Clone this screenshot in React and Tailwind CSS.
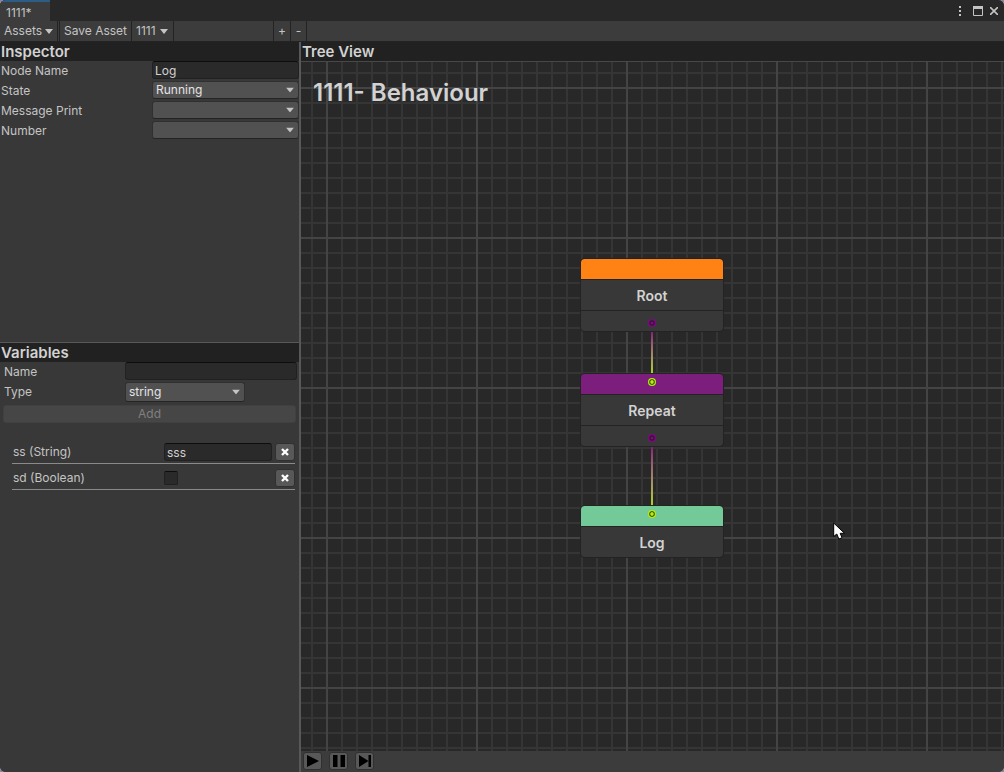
import React from "react";

function Caret({ className = "" }) {
  return (
    <svg viewBox="0 0 8 5" className={`w-2 h-[5px] ${className}`} aria-hidden="true">
      <path d="M0 0H8L4 5Z" fill="#c4c4c4" />
    </svg>
  );
}

const fieldClass =
  "block rounded-[3px] border border-[#212121] border-t-[#0d0d0d] bg-[#2a2a2a] text-xs text-[#d2d2d2] outline-none";

function Dropdown({ id, options, className }) {
  return (
    <div className={`relative ${className}`}>
      <select
        id={id}
        className="block h-full w-full appearance-none rounded-[3px] border border-[#303030] border-b-[#242424] bg-[#515151] pl-[3px] pr-5 text-xs leading-4 text-[#e4e4e4] outline-none"
      >
        {options.map((o) => (
          <option key={o}>{o}</option>
        ))}
      </select>
      <Caret className="pointer-events-none absolute right-[5px] top-1/2 -translate-y-1/2" />
    </div>
  );
}

function PanelTitle({ children }) {
  return (
    <h2 className="h-[19px] shrink-0 bg-[#212121] pl-px text-[15px] font-semibold leading-[19px] text-[#d2d2d2]">
      {children}
    </h2>
  );
}

function InspectorRow({ id, label, children }) {
  return (
    <div className="flex h-5 items-start pl-px">
      <label htmlFor={id} className="w-[151px] shrink-0 text-xs leading-5">
        {label}
      </label>
      {children}
    </div>
  );
}

function VariableRow({ id, label, children }) {
  return (
    <div className="flex h-[26px] items-center border-b border-[#8a8a8a] pt-[3px]">
      <label htmlFor={id} className="w-[152px] shrink-0 pl-px text-xs">
        {label}
      </label>
      <div className="flex-1">{children}</div>
      <button
        aria-label={`Remove ${label}`}
        className="ml-[3px] flex h-[18px] w-5 items-center justify-center rounded-[3px] border border-[#303030] bg-[#585858]"
      >
        <svg viewBox="0 0 8 8" className="size-2" aria-hidden="true">
          <path d="M1 1L7 7M7 1L1 7" stroke="#fff" strokeWidth="2.4" />
        </svg>
      </button>
    </div>
  );
}

function Port({ color, filled }) {
  return (
    <svg viewBox="0 0 8 8" className="size-2" aria-hidden="true">
      <circle cx="4" cy="4" r="4" fill={color} />
      <circle cx="4" cy="4" r="2.7" fill="#212121" />
      <circle cx="4" cy="4" r={filled ? 1.9 : 1.5} fill={color} />
    </svg>
  );
}

function TreeNode({ title, header, input, output, className }) {
  return (
    <div
      className={`absolute left-[280px] w-[142px] overflow-hidden rounded-[3px] bg-[#383838] outline-1 outline-[#232323] ${className}`}
    >
      <div className={`flex h-5 justify-center pt-1 ${header}`}>
        {input && <Port color="#b4f000" filled />}
      </div>
      <div className="flex h-[31px] items-center justify-center border-t border-[#232323] pt-0.5 text-sm font-semibold text-[#d2d2d2]">
        {title}
      </div>
      {output && (
        <div className="flex h-[21px] justify-center border-t border-[#232323] pt-2">
          <Port color="#8b008b" />
        </div>
      )}
    </div>
  );
}

function PlayerButton({ label, children }) {
  return (
    <button
      aria-label={label}
      className="flex h-[18px] w-[19px] items-center justify-center rounded-[3px] border border-[#303030] bg-[#585858]"
    >
      <svg viewBox="0 0 14 14" className="size-3.5 shrink-0" fill="#000" aria-hidden="true">
        {children}
      </svg>
    </button>
  );
}

function TitleBar() {
  return (
    <header className="flex h-[21px] shrink-0 bg-[#282828]">
      <div className="flex w-[50px] items-center border-t-2 border-[#2c5d87] bg-[#3c3c3c] pl-1.5 pt-0.5 text-xs">
        1111*
      </div>
      <div className="ml-auto flex items-center pr-1.5">
        <button aria-label="Menu" className="mr-[11px]">
          <svg viewBox="0 0 4 10" className="h-2.5 w-1" fill="#c4c4c4">
            <path d="M1 0h2v2H1zM1 4h2v2H1zM1 8h2v2H1z" />
          </svg>
        </button>
        <button aria-label="Maximize" className="mr-[7px]">
          <svg viewBox="0 0 10 10" className="size-2.5">
            <path d="M.5 1H9.500V9.500H.5Z" fill="none" stroke="#c4c4c4" />
            <path d="M0 0H10V3H0Z" fill="#c4c4c4" />
          </svg>
        </button>
        <button aria-label="Close">
          <svg viewBox="0 0 8 8" className="size-2">
            <path d="M0 0L8 8M8 0L0 8" stroke="#c4c4c4" strokeWidth="1.600" />
          </svg>
        </button>
      </div>
    </header>
  );
}

function Toolbar() {
  return (
    <nav className="flex h-[21px] shrink-0 border-b border-[#232323] bg-[#3c3c3c] text-xs">
      <button className="flex w-[58px] items-center gap-[3px] border-r border-[#232323] pl-1">
        Assets <Caret />
      </button>
      <button className="ml-px w-[73px] border-x border-[#232323] pb-px">Save Asset</button>
      <button className="flex w-[42px] items-center gap-1 border-r border-[#232323] pl-1">
        1111 <Caret />
      </button>
      <button className="ml-[99px] w-[18px] border-x border-[#232323] leading-4">+</button>
      <button className="w-4 border-r border-[#232323] leading-4">-</button>
    </nav>
  );
}

function Sidebar() {
  return (
    <aside className="flex w-[301px] shrink-0 flex-col border-r-2 border-[#585858] bg-[#383838]">
      <section className="h-[301px] shrink-0 border-b border-[#585858]">
        <PanelTitle>Inspector</PanelTitle>
        <InspectorRow id="node-name" label="Node Name">
          <input
            id="node-name"
            defaultValue="Log"
            className={`h-[18px] w-full min-w-0 px-[2px] ${fieldClass}`}
          />
        </InspectorRow>
        <InspectorRow id="state" label="State">
          <Dropdown id="state" options={["Running", "Success", "Failure"]} className="h-[18px] flex-1" />
        </InspectorRow>
        <InspectorRow id="message" label="Message Print">
          <Dropdown id="message" options={[""]} className="h-[18px] flex-1" />
        </InspectorRow>
        <InspectorRow id="number" label="Number">
          <Dropdown id="number" options={[""]} className="h-[18px] flex-1" />
        </InspectorRow>
      </section>
      <section className="flex-1">
        <PanelTitle>Variables</PanelTitle>
        <div className="flex h-5 items-start pl-1 pr-0.5">
          <label htmlFor="var-name" className="w-[121px] shrink-0 text-xs leading-5">
            Name
          </label>
          <input id="var-name" className={`h-[18px] w-full min-w-0 px-[2px] ${fieldClass}`} />
        </div>
        <div className="flex h-5 items-center pl-1">
          <label htmlFor="var-type" className="w-[121px] shrink-0 text-xs">
            Type
          </label>
          <Dropdown id="var-type" options={["string", "bool", "int"]} className="h-5 w-[120px]" />
        </div>
        <div className="px-[3px] pt-[3px]">
          <button
            disabled
            className="block h-[18px] w-full rounded-[3px] border border-[#404040] bg-[#464646] text-xs leading-4 text-[#808080]"
          >
            Add
          </button>
        </div>
        <div className="ml-3 mr-1 mt-[15px]">
          <VariableRow id="ss" label="ss (String)">
            <input id="ss" defaultValue="sss" className={`h-[18px] w-full px-[2px] ${fieldClass}`} />
          </VariableRow>
          <VariableRow id="sd" label="sd (Boolean)">
            <input
              id="sd"
              type="checkbox"
              className="block size-3.5 appearance-none rounded-[2px] border border-[#212121] border-t-[#0d0d0d] bg-[#2a2a2a]"
            />
          </VariableRow>
        </div>
      </section>
    </aside>
  );
}

function Canvas() {
  return (
    <div className="relative flex-1 overflow-hidden border-t border-[#484848] bg-[#282828] bg-[linear-gradient(to_right,#444444_2px,transparent_2px),linear-gradient(to_bottom,#444444_2px,transparent_2px),linear-gradient(to_right,#353535_2px,transparent_2px),linear-gradient(to_bottom,#353535_2px,transparent_2px)] bg-[size:150px_150px,150px_150px,15px_15px,15px_15px] bg-[position:25px_25px,25px_25px,10px_10px,10px_10px]">
      <h1 className="pl-3 pt-[15px] text-2xl font-semibold text-[#d2d2d2]">1111- Behaviour</h1>
      <TreeNode title="Root" header="bg-[#ff8214]" output className="top-[197px]" />
      <TreeNode title="Repeat" header="bg-[#7c1f7c]" input output className="top-[312px]" />
      <TreeNode title="Log" header="bg-[#73c997]" input className="top-[444px]" />
      <div className="absolute left-[350px] top-[270px] h-[41px] w-0.5 bg-linear-to-b from-[#8c1a78] to-[#acd210]" />
      <div className="absolute left-[350px] top-[385px] h-[58px] w-0.5 bg-linear-to-b from-[#8c1a78] to-[#acd210]" />
      <svg viewBox="0 0 12 18" className="absolute left-[532px] top-[460px] h-[18px] w-3" aria-hidden="true">
        <path
          d="M.7 1V14.500L3.800 12L5.800 17L9 15.800L7.200 11.300H11.500Z"
          fill="#fff"
          stroke="#000"
        />
      </svg>
    </div>
  );
}

export default function App() {
  return (
    <div className="min-h-screen bg-[#8c8798]">
      <div className="flex min-h-screen flex-col overflow-hidden rounded-md bg-[#383838] font-['Inter',sans-serif] text-[#c4c4c4]">
        <TitleBar />
        <Toolbar />
        <div className="flex flex-1">
          <Sidebar />
          <main className="flex min-w-0 flex-1 flex-col">
            <PanelTitle>Tree View</PanelTitle>
            <Canvas />
            <footer className="flex h-[21px] shrink-0 items-start gap-[7px] bg-[#3c3c3c] pl-0.5 pt-px">
              <PlayerButton label="Play">
                <path d="M1 1L13 7L1 13Z" />
              </PlayerButton>
              <PlayerButton label="Pause">
                <path d="M1 1h4.500v12H1zM8.500 1H13v12H8.500z" />
              </PlayerButton>
              <PlayerButton label="Step">
                <path d="M1 1L10.500 7L1 13ZM10.500 1h2.500v12h-2.500z" />
              </PlayerButton>
            </footer>
          </main>
        </div>
      </div>
    </div>
  );
}
